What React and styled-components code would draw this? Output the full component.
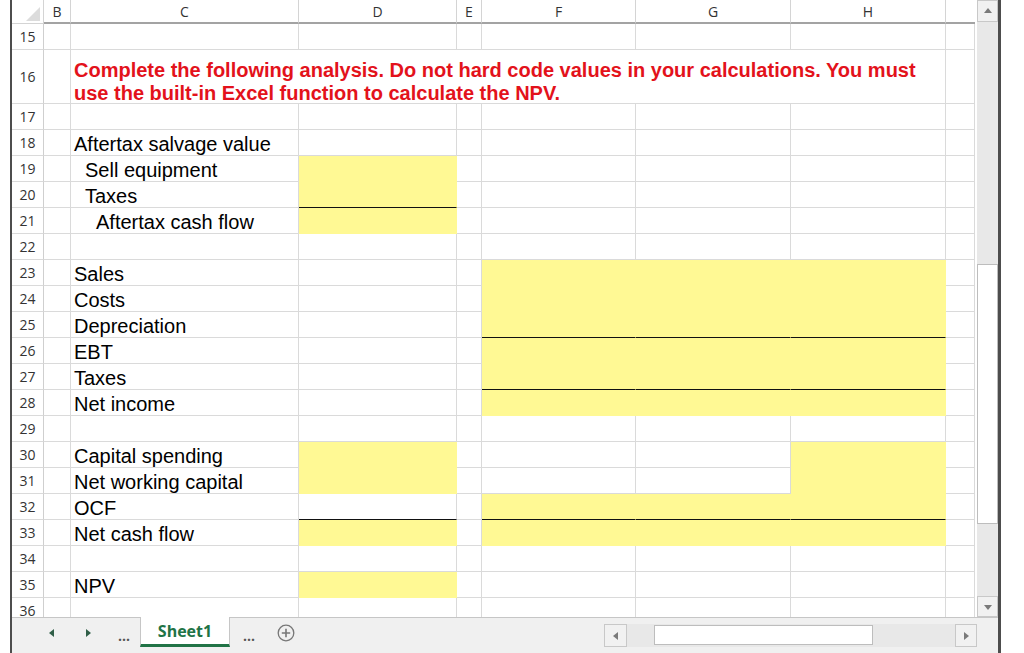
import React from "react";
import styled, { createGlobalStyle } from "styled-components";

const GlobalStyle = createGlobalStyle`
  html, body {
    margin: 0;
    padding: 0;
    background: #fff;
    overflow: hidden;
  }
  body {
    font-family: "Liberation Sans", Arial, sans-serif;
  }
`;

const YELLOW = "#fff994";
const GRID = "#dadada";

const COLS = ["", "B", "C", "D", "E", "F", "G", "H", ""];
const WIDTHS = [32, 27, 228, 158, 25, 154, 155, 155, 29];

// row number -> { label, indent, fill: [cols], rule: [cols] }
const ROWS = [
  { n: 15 },
  { n: 16, note: true },
  { n: 17 },
  { n: 18, label: "Aftertax salvage value" },
  { n: 19, label: "Sell equipment", indent: 1, fill: ["D"] },
  { n: 20, label: "Taxes", indent: 1, fill: ["D"], rule: ["D"] },
  { n: 21, label: "Aftertax cash flow", indent: 2, fill: ["D"] },
  { n: 22 },
  { n: 23, label: "Sales", fill: ["F", "G", "H"] },
  { n: 24, label: "Costs", fill: ["F", "G", "H"] },
  { n: 25, label: "Depreciation", fill: ["F", "G", "H"], rule: ["F", "G", "H"] },
  { n: 26, label: "EBT", fill: ["F", "G", "H"] },
  { n: 27, label: "Taxes", fill: ["F", "G", "H"], rule: ["F", "G", "H"] },
  { n: 28, label: "Net income", fill: ["F", "G", "H"] },
  { n: 29 },
  { n: 30, label: "Capital spending", fill: ["D", "H"] },
  { n: 31, label: "Net working capital", fill: ["D", "H"] },
  { n: 32, label: "OCF", fill: ["F", "G", "H"], rule: ["D", "F", "G", "H"] },
  { n: 33, label: "Net cash flow", fill: ["D", "F", "G", "H"] },
  { n: 34 },
  { n: 35, label: "NPV", fill: ["D"] },
  { n: 36 },
];

const Window = styled.div`
  width: 986px;
  height: 653px;
  margin-left: 10px;
  border-left: 2px solid #4d4d4d;
  border-right: 3px solid #4d4d4d;
  display: flex;
  flex-direction: column;
  background: #fff;
`;

const Body = styled.div`
  display: flex;
  height: 617px;
`;

const Grid = styled.div`
  width: 963px;
  height: 617px;
  overflow: hidden;
  display: grid;
  grid-template-columns: ${WIDTHS.map((w) => w + "px").join(" ")};
  grid-template-rows: 24px 26px 54px;
  grid-auto-rows: 26px;
`;

const ColHead = styled.div`
  box-sizing: border-box;
  border-right: ${(props) => (props.$last ? "none" : "1px solid #d4d4d4")};
  border-bottom: 2px solid #a3a3a3;
  display: flex;
  align-items: center;
  justify-content: center;
  font-family: "Open Sans", "Noto Sans", sans-serif;
  font-size: 14px;
  color: #333;
`;

const Corner = styled.div`
  box-sizing: border-box;
  border-right: 1px solid #d4d4d4;
  border-bottom: 1px solid #d4d4d4;
  display: flex;
  align-items: flex-end;
  justify-content: flex-end;
  padding: 0 3px 2px 0;
`;

const RowHead = styled.div`
  box-sizing: border-box;
  border-right: 1px solid #cfcfcf;
  border-bottom: 1px solid ${GRID};
  display: flex;
  align-items: center;
  justify-content: center;
  font-family: "Open Sans", "Noto Sans", sans-serif;
  font-size: 14px;
  color: #333;
`;

const Cell = styled.div`
  box-sizing: border-box;
  grid-column: span ${(props) => props.$span || 1};
  background: ${(props) => (props.$fill ? YELLOW : "#fff")};
  border-right: 1px solid ${(props) => (props.$fill ? YELLOW : GRID)};
  border-bottom: 1px solid
    ${(props) => (props.$rule ? "#111" : props.$fill ? YELLOW : GRID)};
  display: flex;
  align-items: flex-end;
  padding-left: ${(props) => 3 + (props.$indent || 0) * 11}px;
  font-size: 20px;
  line-height: 22px;
  color: #000;
  white-space: nowrap;
`;

const Note = styled.div`
  font-size: 20px;
  line-height: 23px;
  font-weight: bold;
  color: #e3121b;
  margin-bottom: -2px;
`;

const VScroll = styled.div`
  width: 23px;
  box-sizing: border-box;
  border-left: 2px solid #fff;
  background: #e8e8e8;
  display: flex;
  flex-direction: column;
`;

const ScrollBtn = styled.div`
  box-sizing: border-box;
  width: ${(props) => props.$w || "auto"};
  height: ${(props) => props.$h || "auto"};
  background: #f1f1f1;
  border: 1px solid #c8c8c8;
  display: flex;
  align-items: center;
  justify-content: center;
  flex-shrink: 0;
`;

const VThumb = styled.div`
  box-sizing: border-box;
  margin-top: 242px;
  height: 260px;
  background: #fff;
  border: 1px solid #bdbdbd;
`;

const Spacer = styled.div`
  flex: 1;
`;

const TabBar = styled.div`
  box-sizing: border-box;
  height: 36px;
  border-top: 1px solid #c6c6c6;
  background: #f0f0f0;
  display: flex;
  align-items: flex-start;
`;

const NavGroup = styled.div`
  display: flex;
  align-items: center;
  gap: 20px;
  height: 30px;
  padding-left: 32px;
`;

const NavBtn = styled.div`
  width: 16px;
  height: 30px;
  display: flex;
  align-items: center;
  justify-content: center;
`;

const Dots = styled.div`
  height: 30px;
  margin-left: ${(props) => props.$ml}px;
  display: flex;
  align-items: center;
  font-family: "Open Sans", sans-serif;
  font-size: 14px;
  font-weight: bold;
  color: #555;
  padding-top: 4px;
  box-sizing: border-box;
`;

const SheetTab = styled.div`
  box-sizing: border-box;
  margin: -1px 0 0 10px;
  width: 90px;
  height: 30px;
  background: #fff;
  border-left: 1px solid #c6c6c6;
  border-right: 1px solid #c6c6c6;
  border-bottom: 3px solid #217346;
  display: flex;
  align-items: center;
  justify-content: center;
  font-family: "Open Sans", "Noto Sans", sans-serif;
  font-size: 16px;
  font-weight: bold;
  color: #217346;
`;

const AddBtn = styled.div`
  height: 30px;
  margin-left: 22px;
  display: flex;
  align-items: center;
`;

const HScroll = styled.div`
  margin: 6px 21px 0 auto;
  width: 373px;
  height: 23px;
  background: #e8e8e8;
  display: flex;
  align-items: stretch;
`;

const HThumb = styled.div`
  box-sizing: border-box;
  margin: 1px 0 2px 27px;
  width: 219px;
  background: #fff;
  border: 1px solid #bdbdbd;
`;

const Tri = ({ dir, color = "#7a7a7a", size = 8 }) => {
  const pts = {
    up: "0,6 4,1 8,6",
    down: "0,2 8,2 4,7",
    left: "6,0 6,8 1,4",
    right: "2,0 2,8 7,4",
  }[dir];
  return (
    <svg width={size} height={size} viewBox="0 0 8 8">
      <polygon points={pts} fill={color} />
    </svg>
  );
};

const SelectAll = () => (
  <svg width="14" height="14" viewBox="0 0 14 14">
    <polygon points="14,0 14,14 0,14" fill="#dcdcdc" />
  </svg>
);

const PlusCircle = () => (
  <svg width="18" height="18" viewBox="0 0 18 18">
    <circle cx="9" cy="9" r="7.8" fill="none" stroke="#777" strokeWidth="1.3" />
    <path d="M9 4.8v8.4M4.8 9h8.4" stroke="#777" strokeWidth="1.6" />
  </svg>
);

const SheetRow = ({ row }) => {
  const fill = row.fill || [];
  const rule = row.rule || [];
  const cells = [<RowHead key="h">{row.n}</RowHead>];
  cells.push(<Cell key="B" />);
  if (row.note) {
    cells.push(
      <Cell key="note" $span={6}>
        <Note>
          Complete the following analysis. Do not hard code values in your
          calculations. You must
          <br />
          use the built-in Excel function to calculate the NPV.
        </Note>
      </Cell>
    );
  } else {
    COLS.slice(2, 8).forEach((c) => {
      cells.push(
        <Cell
          key={c}
          $fill={fill.includes(c)}
          $rule={rule.includes(c)}
          $indent={c === "C" ? row.indent : 0}
        >
          {c === "C" ? row.label : null}
        </Cell>
      );
    });
  }
  cells.push(<Cell key="I" />);
  return cells;
};

const App = () => {
  return (
    <Window>
      <GlobalStyle />
      <Body>
        <Grid>
          <Corner>
            <SelectAll />
          </Corner>
          {COLS.slice(1).map((c, i) => (
            <ColHead key={i} $last={i === COLS.length - 2}>
              {c}
            </ColHead>
          ))}
          {ROWS.map((row) => (
            <SheetRow key={row.n} row={row} />
          ))}
        </Grid>
        <VScroll>
          <ScrollBtn $h="22px">
            <Tri dir="up" />
          </ScrollBtn>
          <VThumb />
          <Spacer />
          <ScrollBtn $h="21px">
            <Tri dir="down" />
          </ScrollBtn>
        </VScroll>
      </Body>
      <TabBar>
        <NavGroup>
          <NavBtn>
            <Tri dir="left" color="#2f5e47" />
          </NavBtn>
          <NavBtn>
            <Tri dir="right" color="#2f5e47" />
          </NavBtn>
        </NavGroup>
        <Dots $ml={22}>...</Dots>
        <SheetTab>Sheet1</SheetTab>
        <Dots $ml={13}>...</Dots>
        <AddBtn>
          <PlusCircle />
        </AddBtn>
        <HScroll>
          <ScrollBtn $w="23px">
            <Tri dir="left" />
          </ScrollBtn>
          <HThumb />
          <Spacer />
          <ScrollBtn $w="22px">
            <Tri dir="right" />
          </ScrollBtn>
        </HScroll>
      </TabBar>
    </Window>
  );
};

export default App;
